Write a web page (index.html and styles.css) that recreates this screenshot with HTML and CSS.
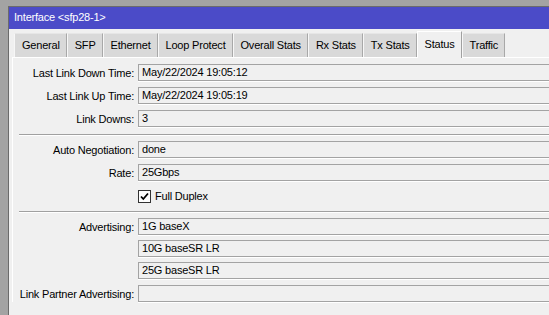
FILE: index.html
```html
<!DOCTYPE html>
<html>
<head>
<meta charset="utf-8">
<link rel="stylesheet" href="styles.css">
</head>
<body>
<div class="window">
  <div class="titlebar">Interface &lt;sfp28-1&gt;</div>
  <div class="tabs">
    <div class="tab">General</div>
    <div class="tab">SFP</div>
    <div class="tab">Ethernet</div>
    <div class="tab">Loop Protect</div>
    <div class="tab">Overall Stats</div>
    <div class="tab">Rx Stats</div>
    <div class="tab">Tx Stats</div>
    <div class="tab active">Status</div>
    <div class="tab">Traffic</div>
  </div>
  <div class="panel">
    <div class="group g1">
      <div class="row"><div class="label">Last Link Down Time:</div><div class="field">May/22/2024 19:05:12</div></div>
      <div class="row"><div class="label">Last Link Up Time:</div><div class="field">May/22/2024 19:05:19</div></div>
      <div class="row"><div class="label">Link Downs:</div><div class="field">3</div></div>
    </div>
    <div class="sep"></div>
    <div class="group g2">
      <div class="row"><div class="label">Auto Negotiation:</div><div class="field">done</div></div>
      <div class="row"><div class="label">Rate:</div><div class="field">25Gbps</div></div>
      <div class="row"><div class="label"></div>
        <div class="check">
          <span class="box"><svg width="11" height="11" viewBox="0 0 11 11"><path d="M2 5.5 L4.3 8 L9 2.5" fill="none" stroke="#000" stroke-width="1.8"/></svg></span>
          <span class="check-label">Full Duplex</span>
        </div>
      </div>
    </div>
    <div class="sep"></div>
    <div class="group g3">
      <div class="row"><div class="label">Advertising:</div><div class="field">1G baseX</div></div>
      <div class="row"><div class="label"></div><div class="field">10G baseSR LR</div></div>
      <div class="row"><div class="label"></div><div class="field">25G baseSR LR</div></div>
      <div class="row last"><div class="label">Link Partner Advertising:</div><div class="field"></div></div>
    </div>
  </div>
</div>
</body>
</html>
```

FILE: styles.css
```css
html, body {
  margin: 0;
  padding: 0;
  width: 549px;
  height: 315px;
  overflow: hidden;
}
body {
  background: #a3a3a3;
  font-family: "Liberation Sans", Arial, sans-serif;
  font-size: 11px;
  letter-spacing: -0.2px;
  color: #000;
  padding: 6px 0 0 8px;
  box-sizing: border-box;
}
.window {
  box-sizing: border-box;
  width: 541px;
  height: 309px;
  overflow: hidden;
  background: #f0f0f0;
  border-left: 1px solid #6b6b6b;
  border-top: 1px solid #6b6b6b;
}
.titlebar {
  height: 22px;
  background: #4b4bc8;
  color: #fff;
  line-height: 21px;
  padding-left: 5px;
}
.tabs {
  display: flex;
  margin-top: 4px;
  padding-left: 5px;
  height: 24px;
  position: relative;
  z-index: 1;
}
.tab {
  box-sizing: border-box;
  height: 24px;
  line-height: 23px;
  padding: 0 6px 0 7px;
  background: #d9d9d9;
  border-left: 1px solid #f7f7f7;
  border-top: 1px solid #e6e6e6;
  border-right: 1px solid #a8a8a8;
}
.tab.active {
  background: #f0f0f0;
  height: 27px;
  margin-top: -2px;
  line-height: 24px;
  border-left: 1px solid #fff;
  border-top: 1px solid #fff;
  border-right: 1px solid #a0a0a0;
}
.panel {
  margin-left: 3px;
  border-top: 1px solid #fff;
  border-left: 1px solid #fff;
  padding-top: 6px;
}
.group {
  display: flex;
  flex-direction: column;
}
.g1 { gap: 6px; }
.g2 { gap: 6px; }
.g3 { gap: 5px; }
.row {
  display: flex;
  align-items: center;
  height: 17px;
}
.row.last { margin-top: 1px; }
.label {
  width: 121px;
  margin-right: 4px;
  text-align: right;
  white-space: nowrap;
  flex: none;
}
.field {
  flex: 1;
  box-sizing: border-box;
  height: 17px;
  line-height: 15px;
  padding-left: 3px;
  margin-right: -2px;
  border: 1px solid #a3a3a3;
  box-shadow: 0 1px 0 #fff;
  background: #f0f0f0;
}
.sep {
  margin: 7px 0 5px 6px;
  height: 1px;
  background: #a0a0a0;
  border-bottom: 1px solid #fff;
}
.check {
  display: flex;
  align-items: center;
  padding-top: 1px;
}
.box {
  width: 13px;
  height: 13px;
  box-sizing: border-box;
  border: 1px solid #333;
  background: #fff;
  display: flex;
  align-items: center;
  justify-content: center;
}
.check-label {
  margin-left: 4px;
}
```
